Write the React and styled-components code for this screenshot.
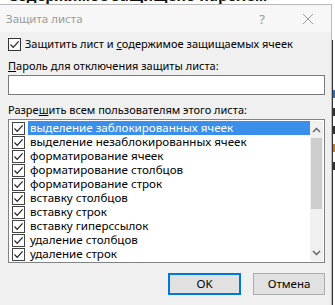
import styled, { createGlobalStyle } from "styled-components";

const GlobalStyle = createGlobalStyle`
  html, body { margin: 0; padding: 0; }
  body { background: #ffffff; font-family: "Noto Sans", "Liberation Sans", sans-serif; }
`;

const items = [
  "выделение заблокированных ячеек",
  "выделение незаблокированных ячеек",
  "форматирование ячеек",
  "форматирование столбцов",
  "форматирование строк",
  "вставку столбцов",
  "вставку строк",
  "вставку гиперссылок",
  "удаление столбцов",
  "удаление строк",
];

const Screen = styled.div`
  position: relative;
  width: 335px;
  height: 305px;
  overflow: hidden;
  background: #ffffff;
`;

const SheetText = styled.div`
  padding: 0 0 0 8px;
  margin-top: -15px;
  font-size: 15px;
  line-height: 20px;
  font-weight: bold;
  color: #111;
  white-space: nowrap;
`;

const SheetEdge = styled.div`
  position: absolute;
  left: 332px;
  top: 40px;
  bottom: 0;
  width: 3px;
  border-left: 1px solid #333;
  display: flex;
  flex-direction: column;
  gap: 10px;
  padding-top: 50px;
`;

const Glyph = styled.span`
  display: block;
  width: 2px;
  height: 8px;
  background: ${(p) => p.color};
`;

const Dialog = styled.div`
  position: absolute;
  left: -1px;
  top: 4px;
  width: 331px;
  height: 310px;
  background: #f0f0f0;
  border: 1px solid #b9b9b9;
  font-size: 11px;
  line-height: 16px;
  color: #000;
`;

const TitleBar = styled.div`
  display: flex;
  align-items: center;
  height: 27px;
  padding: 0 0 0 6px;
  background: #f7f7f7;
  color: #9a9a9a;
  font-size: 11.5px;
`;

const Title = styled.div`
  flex: 1;
`;

const TitleButton = styled.div`
  width: 46px;
  display: flex;
  justify-content: center;
  color: #9a9a9a;
  font-size: 13px;
`;

const Body = styled.div`
  padding: 4px 6px 0 8px;
  display: flex;
  flex-direction: column;
`;

const CheckRow = styled.label`
  display: flex;
  align-items: center;
  gap: 4px;
  height: 16px;
  white-space: nowrap;
`;

const Box = styled.span`
  width: 11px;
  height: 11px;
  border: 1px solid #333;
  background: #fff;
  display: flex;
  align-items: center;
  justify-content: center;
  flex: none;
`;

const Label = styled.div`
  margin-top: ${(p) => p.top}px;
  height: 16px;
  line-height: 16px;
  white-space: nowrap;
`;

const U = styled.span`
  text-decoration: underline;
`;

const Input = styled.div`
  margin-top: 1px;
  height: 18px;
  border: 1px solid #7a7a7a;
  background: #fff;
`;

const ListBox = styled.div`
  margin-top: 1px;
  height: 140px;
  border: 1px solid #828282;
  background: #fff;
  display: flex;
  padding: 1px;
`;

const Items = styled.div`
  flex: 1;
  display: flex;
  flex-direction: column;
  overflow: hidden;
  font-size: 11.6px;
`;

const Item = styled.div`
  display: flex;
  align-items: center;
  height: 14px;
  flex: none;
  white-space: nowrap;
  overflow: hidden;
  padding-left: 2px;
`;

const ItemText = styled.span`
  flex: 1;
  height: 14px;
  line-height: 14px;
  padding-left: 2px;
  margin-left: 3px;
  background: ${(p) => (p.selected ? "#3a8fea" : "transparent")};
  color: ${(p) => (p.selected ? "#fff" : "#000")};
`;

const ItemBox = styled(Box)`
  border-color: #444;
`;

const ScrollBar = styled.div`
  width: 13px;
  display: flex;
  flex-direction: column;
  background: #f0f0f0;
`;

const Arrow = styled.div`
  height: 17px;
  display: flex;
  align-items: center;
  justify-content: center;
`;

const Track = styled.div`
  flex: 1;
  display: flex;
  flex-direction: column;
`;

const Thumb = styled.div`
  height: 71px;
  margin: 0 1px;
  background: #cdcdcd;
`;

const Buttons = styled.div`
  display: flex;
  justify-content: flex-end;
  gap: 12px;
  margin-top: 10px;
`;

const Button = styled.div`
  width: ${(p) => (p.primary ? 69 : 70)}px;
  height: ${(p) => (p.primary ? 18 : 20)}px;
  border: ${(p) => (p.primary ? "2px solid #0078d7" : "1px solid #adadad")};
  background: #e1e1e1;
  display: flex;
  align-items: center;
  justify-content: center;
  font-size: 11.5px;
`;

const Check = () => (
  <svg width="11" height="11" viewBox="0 0 11 11">
    <path d="M1.5 5.5 L4.2 8.3 L9.6 2.4" fill="none" stroke="#222" strokeWidth="1.2" />
  </svg>
);

const Chevron = ({ down }) => (
  <svg width="9" height="6" viewBox="0 0 9 6">
    <path
      d={down ? "M1 1 L4.5 4.5 L8 1" : "M1 5 L4.5 1.5 L8 5"}
      fill="none"
      stroke="#606060"
      strokeWidth="1.4"
    />
  </svg>
);

export default function App() {
  return (
    <>
      <GlobalStyle />
      <Screen>
        <SheetText>Содержимое защищено паролем</SheetText>
        <SheetEdge>
          <Glyph color="#2a6ec0" />
          <Glyph color="#333" />
          <Glyph color="#333" />
          <Glyph color="#c87a1e" />
          <Glyph color="#333" />
        </SheetEdge>
        <Dialog>
          <TitleBar>
            <Title>Защита листа</Title>
            <TitleButton>?</TitleButton>
            <TitleButton>
              <svg width="12" height="12" viewBox="0 0 12 12">
                <path d="M1 1 L11 11 M11 1 L1 11" stroke="#9a9a9a" strokeWidth="1" />
              </svg>
            </TitleButton>
          </TitleBar>
          <Body>
            <CheckRow>
              <Box>
                <Check />
              </Box>
              <span>
                Защитить лист и <U>с</U>одержимое защищаемых ячеек
              </span>
            </CheckRow>
            <Label top={6}>
              <U>П</U>ароль для отключения защиты листа:
            </Label>
            <Input />
            <Label top={7}>
              Разре<U>ш</U>ить всем пользователям этого листа:
            </Label>
            <ListBox>
              <Items>
                {items.map((t, i) => (
                  <Item key={t}>
                    <ItemBox>
                      <Check />
                    </ItemBox>
                    <ItemText selected={i === 0}>{t}</ItemText>
                  </Item>
                ))}
              </Items>
              <ScrollBar>
                <Arrow>
                  <Chevron />
                </Arrow>
                <Track>
                  <Thumb />
                </Track>
                <Arrow>
                  <Chevron down />
                </Arrow>
              </ScrollBar>
            </ListBox>
            <Buttons>
              <Button primary>OK</Button>
              <Button>Отмена</Button>
            </Buttons>
          </Body>
        </Dialog>
      </Screen>
    </>
  );
}
